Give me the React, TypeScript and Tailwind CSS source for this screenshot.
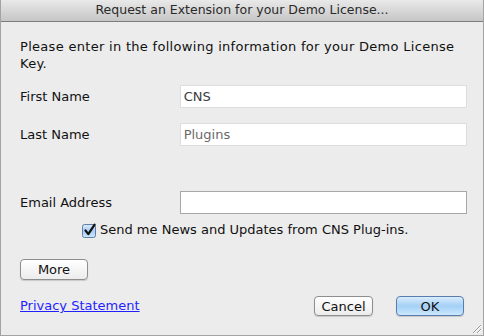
import React from 'react';

const font = { fontFamily: '"DejaVu Sans", "Liberation Sans", sans-serif' };

function CheckBox() {
  return (
    <svg width="15" height="15" viewBox="0 0 15 15" className="shrink-0">
      <defs>
        <linearGradient id="cb" x1="0" y1="0" x2="0" y2="1">
          <stop offset="0" stopColor="#dbeafb" />
          <stop offset="0.5" stopColor="#a9cdf3" />
          <stop offset="1" stopColor="#cfe6fb" />
        </linearGradient>
      </defs>
      <rect x="0.5" y="1.5" width="13" height="13" rx="2" fill="url(#cb)" stroke="#5f7fa6" />
      <path d="M3.5 7.5 L6.3 11.2 L12.6 1.6" fill="none" stroke="#111" strokeWidth="2.2" strokeLinecap="round" strokeLinejoin="round" />
    </svg>
  );
}

function Grip() {
  return (
    <svg width="12" height="12" viewBox="0 0 12 12" className="absolute right-[1px] bottom-[1px]">
      <path d="M11 3 L3 11 M11 7 L7 11" stroke="#9a9a9a" strokeWidth="1" />
      <path d="M11 4 L4 11 M11 8 L8 11" stroke="#ffffff" strokeWidth="1" />
    </svg>
  );
}

export default function App() {
  return (
    <div className="w-[484px] h-[336px] relative flex flex-col border-x border-b border-[#a3a3a3] bg-[#ececec] text-[13px] text-[#111]" style={font}>
      {/* title bar */}
      <div className="h-[22px] shrink-0 flex items-center justify-center bg-gradient-to-b from-[#e9e9e9] to-[#c6c6c6] border-b border-[#7d7d7d] text-[#2a2a2a] text-[12.5px]">
        Request an Extension for your Demo License...
      </div>

      <div className="flex flex-col pl-[19px] pr-[16px]">
        <p className="mt-[16px] leading-[17px] w-[440px] tracking-[0.3px]">
          Please enter in the following information for your Demo License Key.
        </p>

        <div className="mt-[13px] flex items-center">
          <span className="w-[160px]">First Name</span>
          <div className="w-[288px] h-[23px] bg-white border border-[#dedede] px-[3px] flex items-center text-[#3a3a3a]">CNS</div>
        </div>

        <div className="mt-[15px] flex items-center">
          <span className="w-[160px]">Last Name</span>
          <div className="w-[288px] h-[23px] bg-white border border-[#dedede] px-[3px] flex items-center text-[#6a6a6a]">Plugins</div>
        </div>

        <div className="mt-[45px] flex items-center">
          <span className="w-[160px]">Email Address</span>
          <div className="w-[288px] h-[23px] bg-white border border-[#a8a8a8]" />
        </div>

        <div className="mt-[8px] flex items-center gap-[3px] pl-[62px] h-[16px]">
          <CheckBox />
          <span>Send me News and Updates from CNS Plug-ins.</span>
        </div>

        <div className="mt-[21px]">
          <button className="w-[68px] h-[21px] rounded-[4px] border border-[#8e8e8e] bg-gradient-to-b from-white to-[#ececec] shadow-[0_1px_1px_rgba(0,0,0,0.15)] leading-none">
            More
          </button>
        </div>

        <div className="mt-[16px] flex items-center">
          <a href="#" className="text-[#1f1fff] underline">Privacy Statement</a>
          <div className="ml-auto flex gap-[23px] pr-[3px]">
            <button className="w-[59px] h-[20px] rounded-[4px] border border-[#8e8e8e] bg-gradient-to-b from-white to-[#ececec] shadow-[0_1px_1px_rgba(0,0,0,0.15)] leading-none">
              Cancel
            </button>
            <button className="w-[68px] h-[20px] rounded-[4px] border border-[#5a7db0] bg-gradient-to-b from-[#d9ecfc] via-[#a4d0f6] to-[#cbe7fd] shadow-[0_1px_1px_rgba(0,0,0,0.15)] leading-none">
              OK
            </button>
          </div>
        </div>
      </div>
      <Grip />
    </div>
  );
}
